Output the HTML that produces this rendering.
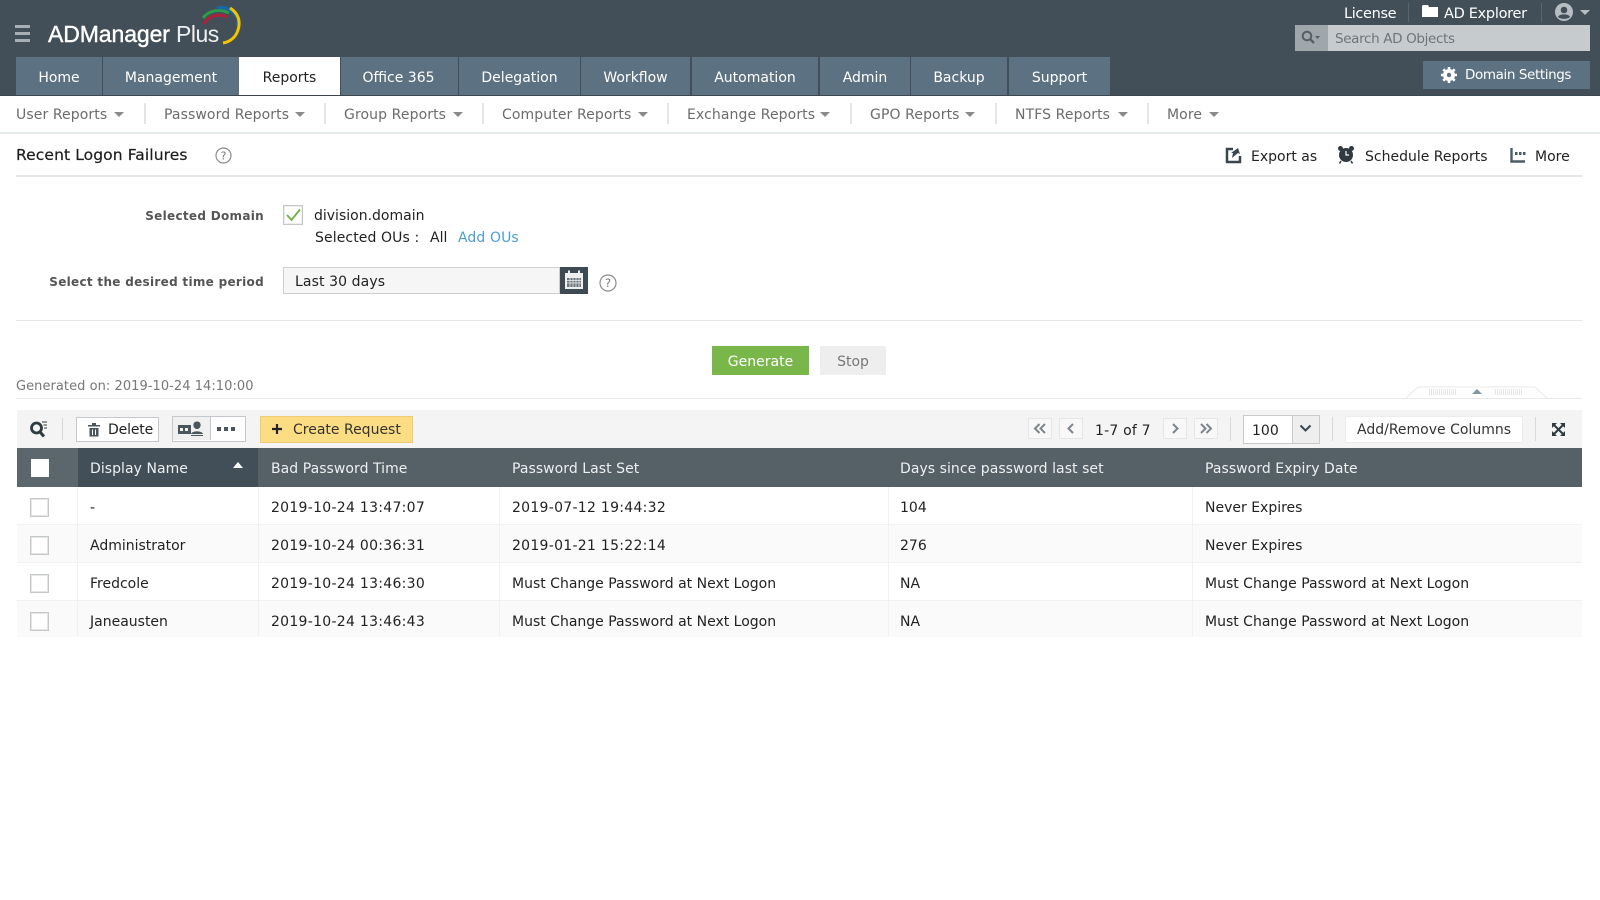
<!DOCTYPE html>
<html><head><meta charset="utf-8"><title>ADManager Plus</title>
<style>
html,body{margin:0;padding:0;width:1600px;height:900px;overflow:hidden;background:#fff}
body{position:relative;font-family:"DejaVu Sans",sans-serif;font-size:14px;letter-spacing:0;color:#222}
.a{position:absolute}
.t{position:absolute;white-space:nowrap;line-height:20px}
.d{letter-spacing:.28px}
.tab{position:absolute;top:57px;height:38px;background:#5c7181;color:#fff;text-align:center;line-height:42px;font-size:14px}
.tab.on{background:#fff;color:#222}
.sn{position:absolute;top:105px;line-height:20px;color:#6b6b6b;white-space:nowrap;letter-spacing:.1px}
.caret{position:absolute;width:0;height:0;border-left:5px solid transparent;border-right:5px solid transparent;border-top:5px solid #8a8a8a}
.sep{position:absolute;top:103px;width:2px;height:21px;background:#e4e6e6}
.cb{position:absolute;left:30px;width:17px;height:17px;border:1px solid #c4c8c8;box-shadow:inset 0 0 0 1px #e4e6e6;background:#fff}
.th{position:absolute;top:448px;height:39px;line-height:43px;color:#eef0f0;white-space:nowrap;letter-spacing:.05px}
.row{position:absolute;left:17px;width:1565px;height:37px;border-bottom:1px solid #f0f1f1}
.cl{position:absolute;top:487px;width:1px;height:150px;background:#f0f1f1}
.pg{position:absolute;top:418px;width:22px;height:19px;border:1px solid #e6e6e6;background:#f8f8f8}
.lb{font-weight:bold;font-size:12px;color:#555;letter-spacing:.3px}
</style></head><body>

<div class="a" style="left:0;top:0;width:1600px;height:95px;background:#424f58"></div>
<div class="a" style="left:0;top:95px;width:1600px;height:1px;background:#3b464e"></div>

<!-- hamburger -->
<div class="a" style="left:15px;top:25px;width:15px;height:3px;background:#a7afb4"></div>
<div class="a" style="left:15px;top:32px;width:15px;height:3px;background:#a7afb4"></div>
<div class="a" style="left:15px;top:39px;width:15px;height:3px;background:#a7afb4"></div>

<!-- logo -->
<div class="t" style="left:48px;top:22px;font:23px/24px 'Liberation Sans',sans-serif;letter-spacing:-.1px;color:#fff;-webkit-text-stroke:.4px #fff">ADManager</div>
<div class="t" style="left:176px;top:22px;font:23px/24px 'Liberation Sans',sans-serif;letter-spacing:-.5px;color:#eef0f1">Plus</div>
<svg class="a" style="left:197px;top:2px" width="50" height="46" viewBox="0 0 50 46" fill="none">
<path d="M7 22C11 14 21 11 30 15" stroke="#b0213a" stroke-width="3"/>
<path d="M6 16C11 9 22 6 32 11" stroke="#2f9a4a" stroke-width="3"/>
<path d="M20 6C28 4 36 8 40 15C41 18 41 21 40 24" stroke="#1667ae" stroke-width="3.2"/>
<path d="M33 6C41 11 44 19 41 28C39 35 33 40 26 41" stroke="#f3c400" stroke-width="3"/>
</svg>

<!-- top right -->
<div class="t" style="left:1344px;top:4px;color:#fff;font-size:14.5px;letter-spacing:-.35px">License</div>
<div class="a" style="left:1408px;top:3px;width:1px;height:19px;background:#5a666e"></div>
<svg class="a" style="left:1422px;top:4px" width="17" height="14" viewBox="0 0 17 14"><path d="M0 2V13H16V3H7L6 1H1Z" fill="#fff"/></svg>
<div class="t" style="left:1444px;top:4px;color:#fff;font-size:14.5px;letter-spacing:-.3px">AD Explorer</div>
<div class="a" style="left:1541px;top:3px;width:1px;height:19px;background:#5a666e"></div>
<svg class="a" style="left:1555px;top:3px" width="36" height="19" viewBox="0 0 36 19"><circle cx="9" cy="9" r="9" fill="#b7bec2"/><circle cx="9" cy="7" r="3.3" fill="#424f58"/><path d="M3 14C4 10.500 14 10.500 15 14C12 16.500 6 16.500 3 14Z" fill="#424f58"/><path d="M25 7H35L30 12Z" fill="#b7bec2"/></svg>

<!-- search -->
<div class="a" style="left:1295px;top:25px;width:295px;height:26px;background:#c6cbce"></div>
<div class="a" style="left:1295px;top:25px;width:33px;height:26px;background:#a0a7ab"></div>
<svg class="a" style="left:1301px;top:30px" width="20" height="15" viewBox="0 0 20 15" fill="none"><circle cx="6" cy="6" r="4.300" stroke="#545f66" stroke-width="2"/><path d="M9 9L13 13" stroke="#545f66" stroke-width="2.400"/><path d="M14 6H19L16.500 9Z" fill="#545f66"/></svg>
<div class="t" style="left:1335px;top:29px;color:#6c757a;font-size:13.5px;letter-spacing:-.35px">Search AD Objects</div>

<!-- domain settings -->
<div class="a" style="left:1423px;top:61px;width:167px;height:28px;background:#5c7181"></div>
<svg class="a" style="left:1441px;top:67px" width="16" height="16" viewBox="0 0 16 16"><circle cx="8" cy="8" r="4.500" fill="none" stroke="#fff" stroke-width="3"/><path d="M8 0V16M0 8H16M2.300 2.300L13.700 13.700M13.700 2.300L2.300 13.700" stroke="#fff" stroke-width="2.600"/><circle cx="8" cy="8" r="2.200" fill="#5c7181"/></svg>
<div class="t" style="left:1465px;top:65px;color:#fff;font-size:13.5px;letter-spacing:-.4px">Domain Settings</div>

<!-- tabs -->
<div class="tab" style="left:16px;width:86px">Home</div>
<div class="tab" style="left:103px;width:136px">Management</div>
<div class="tab on" style="left:239px;width:101px">Reports</div>
<div class="tab" style="left:341px;width:117px;text-indent:-2px">Office 365</div>
<div class="tab" style="left:459px;width:121px">Delegation</div>
<div class="tab" style="left:581px;width:109px">Workflow</div>
<div class="tab" style="left:692px;width:126px">Automation</div>
<div class="tab" style="left:820px;width:90px">Admin</div>
<div class="tab" style="left:911px;width:96px">Backup</div>
<div class="tab" style="left:1009px;width:101px">Support</div>

<!-- sub nav -->
<div class="sn" style="left:16px">User Reports</div><div class="caret" style="left:114px;top:112px"></div><div class="sep" style="left:144px"></div>
<div class="sn" style="left:164px">Password Reports</div><div class="caret" style="left:295px;top:112px"></div><div class="sep" style="left:324px"></div>
<div class="sn" style="left:344px">Group Reports</div><div class="caret" style="left:453px;top:112px"></div><div class="sep" style="left:482px"></div>
<div class="sn" style="left:502px">Computer Reports</div><div class="caret" style="left:638px;top:112px"></div><div class="sep" style="left:667px"></div>
<div class="sn" style="left:687px">Exchange Reports</div><div class="caret" style="left:820px;top:112px"></div><div class="sep" style="left:850px"></div>
<div class="sn" style="left:870px">GPO Reports</div><div class="caret" style="left:965px;top:112px"></div><div class="sep" style="left:995px"></div>
<div class="sn" style="left:1015px">NTFS Reports</div><div class="caret" style="left:1118px;top:112px"></div><div class="sep" style="left:1147px"></div>
<div class="sn" style="left:1167px">More</div><div class="caret" style="left:1209px;top:112px"></div>
<div class="a" style="left:0;top:132px;width:1600px;height:2px;background:#e6ebeb"></div>

<!-- title bar -->
<div class="t" style="left:16px;top:145px;font-size:15.5px;letter-spacing:.1px;color:#1d1d1d;-webkit-text-stroke:.2px #1d1d1d">Recent Logon Failures</div>
<svg class="a" style="left:215px;top:147px" width="17" height="17" viewBox="0 0 17 17"><circle cx="8.500" cy="8.500" r="7.500" fill="none" stroke="#8b8b8b" stroke-width="1.200"/><text x="8.500" y="12.500" text-anchor="middle" font-size="11" fill="#777" font-family="DejaVu Sans">?</text></svg>
<svg class="a" style="left:1225px;top:147px" width="17" height="17" viewBox="0 0 17 17" fill="none"><path d="M8 2H2V15H15V9" stroke="#3a464e" stroke-width="2.500"/><path d="M7 11L8 6H6L13 1L15 7L13 6L7 11Z" fill="#3a464e"/></svg>
<div class="t" style="left:1251px;top:147px">Export as</div>
<svg class="a" style="left:1337px;top:145px" width="18" height="19" viewBox="0 0 18 19"><circle cx="9" cy="10" r="7" fill="#2f3a41"/><circle cx="3.500" cy="3.500" r="2.500" fill="#2f3a41"/><circle cx="14.500" cy="3.500" r="2.500" fill="#2f3a41"/><path d="M9 6V10H12" stroke="#fff" stroke-width="1.200" fill="none"/><path d="M4 16L2.500 18.500M14 16L15.500 18.500" stroke="#2f3a41" stroke-width="1.500"/></svg>
<div class="t" style="left:1365px;top:147px">Schedule Reports</div>
<svg class="a" style="left:1510px;top:147px" width="16" height="16" viewBox="0 0 16 16" fill="none"><path d="M1.500 1V14.500H15" stroke="#4c5a63" stroke-width="2.400"/><path d="M5 5H7.500V8H5ZM9 5H11.500V8H9ZM13 5H15.500V8H13Z" fill="#4c5a63"/></svg>
<div class="t" style="left:1535px;top:147px">More</div>
<div class="a" style="left:16px;top:175px;width:1566px;height:2px;background:#e4e6e6"></div>

<!-- form -->
<div class="t lb" style="right:1336px;top:206px">Selected Domain</div>
<div class="a" style="left:283px;top:205px;width:18px;height:18px;border:1px solid #c4c8c8;box-shadow:inset 0 0 0 1px #eee"></div>
<svg class="a" style="left:285px;top:208px" width="17" height="14" viewBox="0 0 17 14" fill="none"><path d="M2 7L6.500 12L15 1.500" stroke="#6db33f" stroke-width="1.800"/></svg>
<div class="t" style="left:314px;top:206px">division.domain</div>
<div class="t" style="left:315px;top:228px;letter-spacing:.1px">Selected OUs :</div>
<div class="t" style="left:430px;top:228px">All</div>
<div class="t" style="left:458px;top:228px;color:#4a9fd0;letter-spacing:.1px">Add OUs</div>
<div class="t lb" style="right:1336px;top:272px">Select the desired time period</div>
<div class="a" style="left:283px;top:267px;width:275px;height:25px;background:#f6f6f6;border:1px solid #cdd0d0"></div>
<div class="t" style="left:295px;top:272px;letter-spacing:.1px">Last 30 days</div>
<div class="a" style="left:560px;top:267px;width:28px;height:27px;background:#3d4a53"></div>
<svg class="a" style="left:564px;top:270px" width="20" height="20" viewBox="0 0 20 20"><rect x="1" y="3" width="18" height="16" fill="#eef0f0"/><rect x="3" y="8" width="14" height="9" fill="#6a757c"/><rect x="4" y="0.500" width="2" height="5" fill="#eef0f0"/><rect x="14" y="0.500" width="2" height="5" fill="#eef0f0"/><path d="M3 10.500H17M3 13H17M6 8V17M9 8V17M12 8V17M15 8V17" stroke="#eef0f0" stroke-width=".8"/></svg>
<svg class="a" style="left:599px;top:274px" width="18" height="18" viewBox="0 0 18 18"><circle cx="9" cy="9" r="8" fill="none" stroke="#8b8b8b" stroke-width="1.200"/><text x="9" y="13" text-anchor="middle" font-size="11.500" fill="#777" font-family="DejaVu Sans">?</text></svg>
<div class="a" style="left:16px;top:320px;width:1566px;height:1px;background:#e4e6e6"></div>

<div class="a" style="left:712px;top:346px;width:97px;height:29px;background:#79b74a;color:#fff;text-align:center;line-height:32px">Generate</div>
<div class="a" style="left:820px;top:346px;width:66px;height:29px;background:#eeeeee;color:#777;text-align:center;line-height:32px">Stop</div>
<div class="t" style="left:16px;top:377px;color:#777;font-size:13px;letter-spacing:.05px">Generated on: 2019-10-24 14:10:00</div>
<div class="a" style="left:16px;top:398px;width:1566px;height:1px;background:#e8e9e9"></div>
<svg class="a" style="left:1405px;top:386px" width="145" height="13" viewBox="0 0 145 13" fill="none"><path d="M1 12L13 1H130L142 12" stroke="#e8e9e9" fill="#fff"/><path d="M24 4H52M24 6H52M24 8H52M90 4H118M90 6H118M90 8H118" stroke="#c9cccc" stroke-dasharray="1 1"/><path d="M67 8L72 3L77 8Z" fill="#7f97a6"/></svg>

<!-- toolbar -->
<div class="a" style="left:17px;top:410px;width:1565px;height:38px;background:#f4f4f4"></div>
<svg class="a" style="left:29px;top:420px" width="20" height="18" viewBox="0 0 20 18" fill="none"><circle cx="7.500" cy="8" r="5" stroke="#2f3a41" stroke-width="2.800"/><path d="M11 12L15 16.500" stroke="#2f3a41" stroke-width="3"/><path d="M13 2H18M14.500 5H18M15 8H18" stroke="#2f3a41" stroke-width="1"/></svg>
<div class="a" style="left:62px;top:418px;width:1px;height:22px;background:#d8dada"></div>
<div class="a" style="left:76px;top:417px;width:81px;height:23px;background:#fff;border:1px solid #c4c8cc"></div>
<svg class="a" style="left:87px;top:422px" width="14" height="15" viewBox="0 0 14 15"><path d="M1 3H13V4.500H1ZM5 1H9V3H5ZM2.500 6H11.500V14.500H2.500Z" fill="#4a555c"/><path d="M5.500 7.500V13M8.500 7.500V13" stroke="#fff"/></svg>
<div class="t" style="left:108px;top:420px;letter-spacing:-.15px">Delete</div>
<div class="a" style="left:172px;top:416px;width:72px;height:24px;background:#fff;border:1px solid #c4c8cc"></div>
<div class="a" style="left:172px;top:417px;width:37px;height:23px;background:#f0f0f0;border-right:1px solid #c4c8cc;margin-left:1px"></div>
<svg class="a" style="left:178px;top:421px" width="26" height="15" viewBox="0 0 26 15"><rect x="0" y="4" width="13" height="9" fill="#4a555c"/><rect x="2" y="7" width="3" height="3" fill="#f0f0f0"/><rect x="7" y="7" width="3" height="3" fill="#f0f0f0"/><path d="M19 0.500C22 0.500 23 3 22.500 5C22 7 20.500 8 19 8C17.500 8 16 7 15.500 5C15 3 16 0.500 19 0.500Z" fill="#4a555c"/><path d="M13 13C14 9.500 24 9.500 25 13Z" fill="#4a555c"/><path d="M13 14.500H25" stroke="#4a555c"/></svg>
<svg class="a" style="left:217px;top:427px" width="18" height="5" viewBox="0 0 18 5"><rect width="4" height="4" fill="#4a555c"/><rect x="7" width="4" height="4" fill="#4a555c"/><rect x="14" width="4" height="4" fill="#4a555c"/></svg>
<div class="a" style="left:260px;top:416px;width:151px;height:25px;background:#fcdd84;border:1px solid #f0cb74"></div>
<svg class="a" style="left:271px;top:423px" width="12" height="12" viewBox="0 0 12 12"><path d="M6 1V11M1 6H11" stroke="#222" stroke-width="2.200"/></svg>
<div class="t" style="left:293px;top:420px;color:#333">Create Request</div>

<div class="pg" style="left:1028px"></div>
<svg class="a" style="left:1033px;top:423px" width="14" height="11" viewBox="0 0 14 11" fill="none"><path d="M6.500 1L2 5.500L6.500 10M12 1L7.500 5.500L12 10" stroke="#7d868c" stroke-width="2"/></svg>
<div class="pg" style="left:1059px"></div>
<svg class="a" style="left:1066px;top:423px" width="10" height="11" viewBox="0 0 10 11" fill="none"><path d="M7 1L2.500 5.500L7 10" stroke="#7d868c" stroke-width="2"/></svg>
<div class="t" style="left:1095px;top:421px;letter-spacing:.2px">1-7 of 7</div>
<div class="pg" style="left:1163px"></div>
<svg class="a" style="left:1170px;top:423px" width="10" height="11" viewBox="0 0 10 11" fill="none"><path d="M3 1L7.500 5.500L3 10" stroke="#7d868c" stroke-width="2"/></svg>
<div class="pg" style="left:1194px"></div>
<svg class="a" style="left:1199px;top:423px" width="14" height="11" viewBox="0 0 14 11" fill="none"><path d="M2 1L6.500 5.500L2 10M7.500 1L12 5.500L7.500 10" stroke="#7d868c" stroke-width="2"/></svg>
<div class="a" style="left:1230px;top:417px;width:1px;height:24px;background:#d8dada"></div>
<div class="a" style="left:1243px;top:415px;width:75px;height:27px;background:#fff;border:1px solid #c8cbcb"></div>
<div class="a" style="left:1292px;top:415px;width:26px;height:27px;background:#eeeeee;border:1px solid #c8cbcb"></div>
<div class="t" style="left:1252px;top:421px">100</div>
<svg class="a" style="left:1299px;top:424px" width="13" height="9" viewBox="0 0 13 9" fill="none"><path d="M1.500 1.500L6.500 6.500L11.500 1.500" stroke="#3a464e" stroke-width="2"/></svg>
<div class="a" style="left:1332px;top:417px;width:1px;height:24px;background:#d8dada"></div>
<div class="a" style="left:1345px;top:416px;width:176px;height:25px;background:#fff;border:1px solid #ececec"></div>
<div class="t" style="left:1357px;top:420px;color:#333">Add/Remove Columns</div>
<div class="a" style="left:1535px;top:417px;width:1px;height:24px;background:#d8dada"></div>
<svg class="a" style="left:1551px;top:422px" width="15" height="15" viewBox="0 0 15 15"><path d="M1 1H6L1 6ZM14 1H9L14 6ZM1 14H6L1 9ZM14 14H9L14 9Z" fill="#2f3a41"/><path d="M3 3L12 12M12 3L3 12" stroke="#2f3a41" stroke-width="2"/></svg>

<!-- table header -->
<div class="a" style="left:17px;top:448px;width:1565px;height:39px;background:#556067"></div>
<div class="a" style="left:78px;top:448px;width:180px;height:39px;background:#424f58"></div>
<div class="a" style="left:17px;top:448px;width:61px;height:39px;background:#5b666d"></div>
<div class="a" style="left:31px;top:459px;width:18px;height:18px;background:#fff"></div>
<div class="th" style="left:90px">Display Name</div>
<svg class="a" style="left:233px;top:462px" width="10" height="6" viewBox="0 0 10 6"><path d="M0 6L5 0L10 6Z" fill="#fff"/></svg>
<div class="th" style="left:271px">Bad Password Time</div>
<div class="th" style="left:512px">Password Last Set</div>
<div class="th" style="left:900px">Days since password last set</div>
<div class="th" style="left:1205px">Password Expiry Date</div>

<!-- rows -->
<div class="row" style="top:487px;background:#fff"></div>
<div class="row" style="top:525px;background:#fafafa"></div>
<div class="row" style="top:563px;background:#fff"></div>
<div class="row" style="top:601px;background:#fafafa;height:36px;border-bottom:0"></div>
<div class="cl" style="left:77px"></div><div class="cl" style="left:258px"></div><div class="cl" style="left:499px"></div><div class="cl" style="left:888px"></div><div class="cl" style="left:1192px"></div>

<div class="cb" style="top:498px"></div>
<div class="t" style="left:90px;top:498px">-</div>
<div class="t d" style="left:271px;top:498px">2019-10-24 13:47:07</div>
<div class="t d" style="left:512px;top:498px">2019-07-12 19:44:32</div>
<div class="t" style="left:900px;top:498px;letter-spacing:0">104</div>
<div class="t" style="left:1205px;top:498px">Never Expires</div>

<div class="cb" style="top:536px"></div>
<div class="t" style="left:90px;top:536px">Administrator</div>
<div class="t d" style="left:271px;top:536px">2019-10-24 00:36:31</div>
<div class="t d" style="left:512px;top:536px">2019-01-21 15:22:14</div>
<div class="t" style="left:900px;top:536px;letter-spacing:0">276</div>
<div class="t" style="left:1205px;top:536px">Never Expires</div>

<div class="cb" style="top:574px"></div>
<div class="t" style="left:90px;top:574px">Fredcole</div>
<div class="t d" style="left:271px;top:574px">2019-10-24 13:46:30</div>
<div class="t" style="left:512px;top:574px">Must Change Password at Next Logon</div>
<div class="t" style="left:900px;top:574px">NA</div>
<div class="t" style="left:1205px;top:574px">Must Change Password at Next Logon</div>

<div class="cb" style="top:612px"></div>
<div class="t" style="left:90px;top:612px">Janeausten</div>
<div class="t d" style="left:271px;top:612px">2019-10-24 13:46:43</div>
<div class="t" style="left:512px;top:612px">Must Change Password at Next Logon</div>
<div class="t" style="left:900px;top:612px">NA</div>
<div class="t" style="left:1205px;top:612px">Must Change Password at Next Logon</div>

</body></html>
